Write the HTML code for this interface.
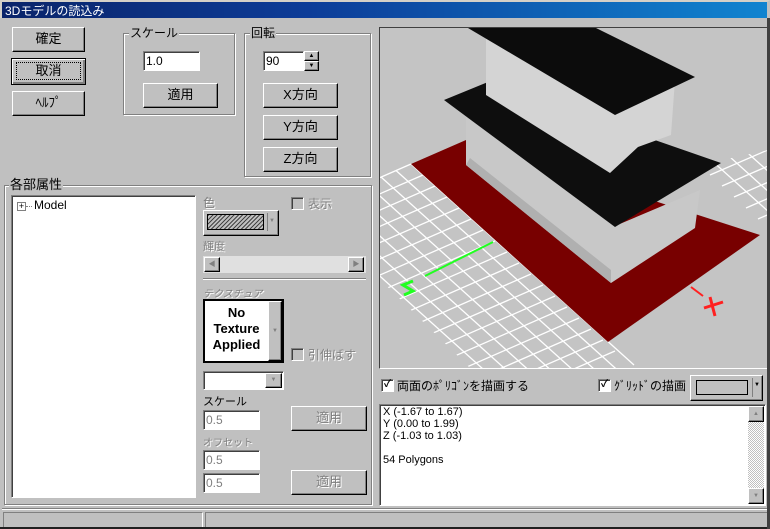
<!DOCTYPE html>
<html><head><meta charset="utf-8"><style>
*{box-sizing:border-box;margin:0;padding:0}
body{width:770px;height:529px;background:#c0c0c0;font-family:"Liberation Sans","Noto Sans CJK JP",sans-serif;font-size:12px;position:relative;overflow:hidden;color:#000}
.a{position:absolute}
.title{left:0;top:0;width:770px;height:18px;background:linear-gradient(90deg,#0a246a,#0c3c98 40%,#1084d0);color:#fff;font-size:12px;line-height:18px;padding-left:3px;border-top:2px solid #d4d0c8;border-left:2px solid #d4d0c8;border-right:3px solid #c0c0c0}
.btn{position:absolute;background:#c0c0c0;border:1px solid;border-color:#fff #000 #000 #fff;box-shadow:inset -1px -1px 0 #808080;text-align:center;font-size:13px}
.sunk{position:absolute;background:#fff;border:1px solid;border-color:#808080 #fff #fff #808080;box-shadow:inset 1px 1px 0 #404040;font-size:12px;padding-left:2px}
.grp{position:absolute;border:1px solid #808080;box-shadow:1px 1px 0 #fff,inset 1px 1px 0 #fff}
.gt{position:absolute;background:#c0c0c0;padding:0 1px;font-size:12px;line-height:13px}
.dis{color:#808080;text-shadow:1px 1px 0 #fff}
.cb{position:absolute;width:13px;height:13px;background:#fff;border:1px solid;border-color:#808080 #fff #fff #808080;box-shadow:inset 1px 1px 0 #404040}
</style></head><body>
<div class="a title">3Dモデルの読込み</div>

<div class="btn" style="left:12px;top:27px;width:73px;height:25px;line-height:22px">確定</div>
<div class="btn" style="left:11px;top:58px;width:75px;height:27px;line-height:24px;border:1px solid #000;box-shadow:inset 1px 1px 0 #fff,inset -2px -2px 0 #808080"><span style="outline:1px dotted #000;outline-offset:0;display:inline-block;width:63px;line-height:16px;margin-top:3px">取消</span></div>
<div class="btn" style="left:12px;top:91px;width:73px;height:25px;line-height:22px">ﾍﾙﾌﾟ</div>

<div class="grp" style="left:123px;top:33px;width:112px;height:82px"></div>
<div class="gt" style="left:129px;top:27px">スケール</div>
<div class="sunk" style="left:143px;top:51px;width:57px;height:20px;line-height:18px">1.0</div>
<div class="btn" style="left:143px;top:83px;width:75px;height:25px;line-height:22px">適用</div>

<div class="grp" style="left:244px;top:33px;width:127px;height:144px"></div>
<div class="gt" style="left:250px;top:27px">回転</div>
<div class="sunk" style="left:263px;top:51px;width:41px;height:20px;line-height:18px">90</div>
<div class="btn" style="left:304px;top:51px;width:15px;height:10px;font-size:6px;line-height:8px">▲</div>
<div class="btn" style="left:304px;top:61px;width:15px;height:10px;font-size:6px;line-height:8px">▼</div>
<div class="btn" style="left:263px;top:83px;width:75px;height:25px;line-height:22px">X方向</div>
<div class="btn" style="left:263px;top:115px;width:75px;height:25px;line-height:22px">Y方向</div>
<div class="btn" style="left:263px;top:147px;width:75px;height:25px;line-height:22px">Z方向</div>

<div class="grp" style="left:4px;top:185px;width:368px;height:320px"></div>
<div class="gt" style="left:9px;top:178px;font-size:13px">各部属性</div>
<div class="sunk" style="left:11px;top:195px;width:185px;height:303px"></div>
<div class="a" style="left:17px;top:202px;width:9px;height:9px;border:1px solid #808080;background:#fff;font-size:9px;line-height:7px;text-align:center">+</div>
<div class="a" style="left:26px;top:206px;width:6px;border-top:1px dotted #808080"></div>
<div class="a" style="left:34px;top:198px;font-size:12px">Model</div>

<div class="a dis" style="left:203px;top:194px;font-size:12px">色</div>
<div class="btn" style="left:203px;top:210px;width:76px;height:26px"></div>
<div class="a" style="left:207px;top:214px;width:57px;height:16px;border:1px solid #000;background:repeating-linear-gradient(135deg,#444 0 1px,#c0c0c0 1px 3px)"></div>
<div class="a" style="left:267px;top:213px;width:1px;height:18px;background:#808080"></div>
<div class="a" style="left:269px;top:218px;font-size:6px;color:#808080">▼</div>
<div class="cb" style="left:291px;top:197px;background:#c0c0c0"></div>
<div class="a dis" style="left:308px;top:195px">表示</div>
<div class="a dis" style="left:203px;top:238px;font-size:11px">輝度</div>
<div class="a" style="left:203px;top:256px;width:163px;height:17px;background:#e0e0e0"></div>
<div class="btn" style="left:204px;top:257px;width:16px;height:15px;font-size:7px;line-height:13px;color:#808080">◀</div>
<div class="btn" style="left:348px;top:257px;width:16px;height:15px;font-size:7px;line-height:13px;color:#808080">▶</div>
<div class="a" style="left:203px;top:278px;width:163px;height:2px;border-top:1px solid #808080;border-bottom:1px solid #fff"></div>
<div class="a dis" style="left:203px;top:285px;font-size:10px;font-style:italic">テクスチュア</div>
<div class="a" style="left:203px;top:299px;width:81px;height:64px;border:2px solid #000;background:#fff"></div>
<div class="a" style="left:205px;top:305px;width:63px;text-align:center;font-weight:bold;font-size:13px;line-height:16px">No<br>Texture<br>Applied</div>
<div class="btn" style="left:268px;top:301px;width:14px;height:60px;font-size:6px;line-height:58px;color:#808080">▼</div>
<div class="cb" style="left:291px;top:348px;background:#c0c0c0"></div>
<div class="a dis" style="left:308px;top:346px">引伸ばす</div>
<div class="sunk" style="left:203px;top:371px;width:81px;height:19px"></div>
<div class="btn" style="left:265px;top:373px;width:17px;height:15px;font-size:6px;line-height:13px;color:#808080">▼</div>
<div class="a" style="left:203px;top:393px;font-size:11px">スケール</div>
<div class="sunk dis" style="left:203px;top:410px;width:57px;height:20px;line-height:18px;text-shadow:none">0.5</div>
<div class="btn dis" style="left:291px;top:406px;width:76px;height:25px;line-height:22px">適用</div>
<div class="a dis" style="left:203px;top:434px;font-size:10px">オフセット</div>
<div class="sunk dis" style="left:203px;top:450px;width:57px;height:20px;line-height:18px;text-shadow:none">0.5</div>
<div class="sunk dis" style="left:203px;top:473px;width:57px;height:20px;line-height:18px;text-shadow:none">0.5</div>
<div class="btn dis" style="left:291px;top:470px;width:76px;height:25px;line-height:22px">適用</div>

<!-- viewport -->
<div class="a" style="left:379px;top:27px;width:390px;height:342px;border:1px solid;border-color:#404040 #fff #fff #404040;overflow:hidden;background:#c4c4c4">
<svg width="388" height="340" viewBox="380 28 388 340" style="display:block">
<defs><clipPath id="g1"><polygon points="340,190 411,160 640,368 470,368 340,240"/></clipPath>
<clipPath id="g2"><polygon points="700,165 768,150 768,235 720,222 700,205"/></clipPath></defs>
<g clip-path="url(#g1)" stroke="#fff" stroke-width="1.3">
<line x1="411" y1="164" x2="634" y2="365"/><line x1="396" y1="170.5" x2="619" y2="371.5"/><line x1="381" y1="177" x2="604" y2="378"/>
<line x1="366" y1="183.5" x2="589" y2="384.5"/><line x1="351" y1="190" x2="574" y2="391"/><line x1="336" y1="196.5" x2="559" y2="397.5"/>
<line x1="321" y1="203" x2="544" y2="404"/><line x1="306" y1="209.5" x2="529" y2="410.5"/><line x1="291" y1="216" x2="514" y2="417"/>
<line x1="276" y1="222.5" x2="499" y2="423.5"/><line x1="261" y1="229" x2="484" y2="430"/>
<line x1="411" y1="164" x2="173" y2="268"/><line x1="423" y1="175" x2="185" y2="279"/><line x1="435" y1="186" x2="197" y2="290"/>
<line x1="447" y1="197" x2="209" y2="301"/><line x1="459" y1="208" x2="221" y2="312"/><line x1="471" y1="219" x2="233" y2="323"/>
<line x1="483" y1="230" x2="245" y2="334"/><line x1="495" y1="241" x2="257" y2="345"/><line x1="507" y1="252" x2="269" y2="356"/>
<line x1="519" y1="263" x2="281" y2="367"/><line x1="531" y1="274" x2="293" y2="378"/><line x1="543" y1="285" x2="305" y2="389"/>
<line x1="555" y1="296" x2="317" y2="400"/><line x1="567" y1="307" x2="329" y2="411"/><line x1="579" y1="318" x2="341" y2="422"/>
<line x1="591" y1="329" x2="353" y2="433"/><line x1="603" y1="340" x2="365" y2="444"/><line x1="615" y1="351" x2="377" y2="455"/>
</g>
<g clip-path="url(#g2)" stroke="#fff" stroke-width="1.3">
<line x1="700" y1="150" x2="820" y2="258"/><line x1="715" y1="143.5" x2="835" y2="251.5"/><line x1="730" y1="137" x2="850" y2="245"/><line x1="745" y1="130.5" x2="865" y2="238.5"/>
<line x1="710" y1="175" x2="800" y2="136"/><line x1="722" y1="186" x2="812" y2="147"/><line x1="734" y1="197" x2="824" y2="158"/><line x1="746" y1="208" x2="836" y2="169"/><line x1="758" y1="219" x2="848" y2="180"/>
</g>
<polygon points="411,164 466,140 760,235 608,342" fill="#780000"/>
<polygon points="466,105 466,165 611,283 695,228 700,190 615,226" fill="#c8c8c8"/>
<polygon points="466,165 611,283 611,270 470,158" fill="#b0b0b0"/>
<polygon points="444,100 488,82 721,163 615,227" fill="#0e0e0e"/>
<polygon points="486,28 486,95 610,173 638,147 671,135 675,80 600,50" fill="#d4d4d4"/>
<polygon points="468,28 596,28 695,77 615,115" fill="#0c0c0c"/>
<line x1="493" y1="242" x2="425" y2="276" stroke="#20ff20" stroke-width="2"/>
<path d="M413,281 L403,285 L413,291 L404,295" stroke="#20ff20" stroke-width="3" fill="none"/>
<line x1="691" y1="287" x2="703" y2="296" stroke="#ff2020" stroke-width="2"/>
<path d="M710,297 L715,316 M704,308 L723,302" stroke="#ff2020" stroke-width="3" fill="none"/>
</svg></div>

<div class="cb" style="left:381px;top:379px;font-size:10px;line-height:10px;text-align:center;font-weight:bold">✓</div>
<div class="a" style="left:397px;top:377px;font-size:12px">両面のﾎﾟﾘｺﾞﾝを描画する</div>
<div class="cb" style="left:598px;top:379px;font-size:10px;line-height:10px;text-align:center;font-weight:bold">✓</div>
<div class="a" style="left:614px;top:377px;font-size:12px">ｸﾞﾘｯﾄﾞの描画</div>
<div class="btn" style="left:690px;top:375px;width:73px;height:26px"></div>
<div class="a" style="left:696px;top:380px;width:52px;height:15px;border:1px solid #000"></div>
<div class="a" style="left:752px;top:378px;width:1px;height:19px;background:#808080"></div>
<div class="a" style="left:754px;top:382px;font-size:6px">▼</div>

<div class="sunk" style="left:379px;top:404px;width:387px;height:102px;padding:1px 0 0 3px;font-size:11px;line-height:12px">X (-1.67 to 1.67)<br>Y (0.00 to 1.99)<br>Z (-1.03 to 1.03)<br><br>54 Polygons</div>
<div class="a" style="left:748px;top:406px;width:16px;height:98px;background:repeating-conic-gradient(#fff 0 25%,#c0c0c0 0 50%) 0 0/2px 2px"></div>
<div class="btn" style="left:748px;top:406px;width:16px;height:16px;font-size:6px;line-height:14px;color:#808080">▲</div>
<div class="btn" style="left:748px;top:488px;width:16px;height:16px;font-size:6px;line-height:14px;color:#808080">▼</div>

<div class="a" style="left:2px;top:508px;width:766px;height:2px;border-top:1px solid #808080;border-bottom:1px solid #fff"></div>
<div class="a" style="left:3px;top:512px;width:200px;height:16px;border:1px solid;border-color:#808080 #fff #fff #808080"></div>
<div class="a" style="left:205px;top:512px;width:563px;height:16px;border:1px solid;border-color:#808080 #fff #fff #808080"></div>
<div class="a" style="left:0;top:527px;width:770px;height:2px;background:#202020"></div>
<div class="a" style="left:767px;top:18px;width:3px;height:511px;background:#404040"></div>
</body></html>
